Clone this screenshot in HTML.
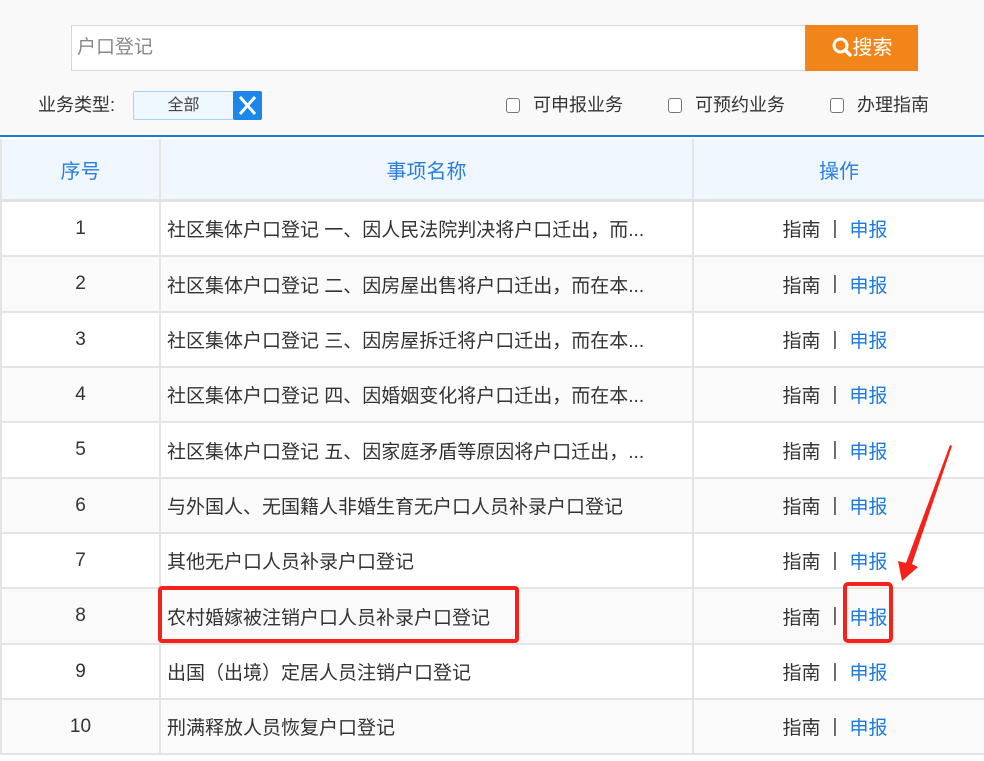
<!DOCTYPE html>
<html><head><meta charset="utf-8"><style>
*{margin:0;padding:0;box-sizing:border-box}
body{width:984px;height:761px;overflow:hidden;background:#fff;font-family:"Liberation Sans","Noto Sans CJK SC",sans-serif;color:#333;position:relative}
.top{position:absolute;left:0;top:0;width:984px;height:137px;background:#f9f9f9;border-bottom:2px solid #1f7ad8}
.inp{position:absolute;left:71px;top:25px;width:735px;height:46px;border:1px solid #d6d6d6;background:#fff;font-size:19px;color:#888;line-height:44px;padding-left:5px}
.btn{position:absolute;left:805px;top:25px;width:113px;height:46px;background:#f18519;color:#fff;font-size:20px;line-height:46px;text-align:center}
.lbl{position:absolute;top:93px;font-size:18px;line-height:24px;color:#333}
.sel{position:absolute;left:133px;top:91px;width:101px;height:29px;border:1px solid #a9d3f5;background:#eef6fe;border-radius:2px;font-size:16px;text-align:center;line-height:27px;color:#444}
.x{position:absolute;left:233px;top:91px;width:29px;height:29px;background:#1c86ea;border-radius:2px}
.cb{position:absolute;top:98px;width:14px;height:15px;border:1px solid #777;border-radius:3px;background:#fff}
.row{position:absolute;left:0;width:984px;border-bottom:2px solid #e4e4e4;font-size:19px}
.row div{position:absolute;top:0;height:100%;display:flex;align-items:center}
.c1{left:0;width:159px;justify-content:center;border-left:2px solid #e4e4e4}
.c2{left:159px;width:533px;border-left:2px solid #e4e4e4;padding-left:6px}
.c3{left:692px;width:292px;border-left:2px solid #e4e4e4;justify-content:center}
.c3x{padding-right:8px}
.hd{color:#2a7fdc;font-size:20px}
.blue{color:#1b7ae0}
.sep{margin:0 12px;color:#444}
</style></head><body>
<div class="top">
<div class="inp">户口登记</div>
<div class="btn"><svg width="22" height="22" viewBox="0 0 22 22" style="vertical-align:-4px"><circle cx="9.5" cy="9.5" r="6.5" fill="none" stroke="#fff" stroke-width="3"/><line x1="14" y1="14" x2="19" y2="19" stroke="#fff" stroke-width="3.5" stroke-linecap="round"/></svg>搜索</div>
<div class="lbl" style="left:38px">业务类型:</div>
<div class="sel">全部</div>
<div class="x"><svg width="29" height="29"><path d="M7 6L22 23M22 6L7 23" stroke="#fff" stroke-width="3"/></svg></div>
<div class="cb" style="left:506px"></div><div class="lbl" style="left:533px">可申报业务</div>
<div class="cb" style="left:668px"></div><div class="lbl" style="left:695px">可预约业务</div>
<div class="cb" style="left:830px"></div><div class="lbl" style="left:857px">办理指南</div>
</div>
<div class="row" style="top:139px;height:63px;background:#eff6fe;border-bottom:3px solid #e2e2e2"><div class="c1 hd">序号</div><div class="c2 hd" style="justify-content:center;padding:0">事项名称</div><div class="c3 hd">操作</div></div>

<div class="row" style="top:202px;height:55px"><div class="c1">1</div><div class="c2">社区集体户口登记 一、因人民法院判决将户口迁出，而...</div><div class="c3 c3x">指南<span class="sep">|</span><span class="blue">申报</span></div></div>
<div class="row" style="top:257px;height:56px;background:#fafafa"><div class="c1">2</div><div class="c2">社区集体户口登记 二、因房屋出售将户口迁出，而在本...</div><div class="c3 c3x">指南<span class="sep">|</span><span class="blue">申报</span></div></div>
<div class="row" style="top:313px;height:55px"><div class="c1">3</div><div class="c2">社区集体户口登记 三、因房屋拆迁将户口迁出，而在本...</div><div class="c3 c3x">指南<span class="sep">|</span><span class="blue">申报</span></div></div>
<div class="row" style="top:368px;height:55px;background:#fafafa"><div class="c1">4</div><div class="c2">社区集体户口登记 四、因婚姻变化将户口迁出，而在本...</div><div class="c3 c3x">指南<span class="sep">|</span><span class="blue">申报</span></div></div>
<div class="row" style="top:423px;height:56px"><div class="c1">5</div><div class="c2">社区集体户口登记 五、因家庭矛盾等原因将户口迁出，...</div><div class="c3 c3x">指南<span class="sep">|</span><span class="blue">申报</span></div></div>
<div class="row" style="top:479px;height:55px;background:#fafafa"><div class="c1">6</div><div class="c2">与外国人、无国籍人非婚生育无户口人员补录户口登记</div><div class="c3 c3x">指南<span class="sep">|</span><span class="blue">申报</span></div></div>
<div class="row" style="top:534px;height:55px"><div class="c1">7</div><div class="c2">其他无户口人员补录户口登记</div><div class="c3 c3x">指南<span class="sep">|</span><span class="blue">申报</span></div></div>
<div class="row" style="top:589px;height:56px;background:#fafafa"><div class="c1">8</div><div class="c2">农村婚嫁被注销户口人员补录户口登记</div><div class="c3 c3x">指南<span class="sep">|</span><span class="blue">申报</span></div></div>
<div class="row" style="top:645px;height:55px"><div class="c1">9</div><div class="c2">出国（出境）定居人员注销户口登记</div><div class="c3 c3x">指南<span class="sep">|</span><span class="blue">申报</span></div></div>
<div class="row" style="top:700px;height:55px;background:#fafafa"><div class="c1">10</div><div class="c2">刑满释放人员恢复户口登记</div><div class="c3 c3x">指南<span class="sep">|</span><span class="blue">申报</span></div></div>

<div style="position:absolute;left:158px;top:586px;width:361px;height:57px;border:4px solid #f5221b;border-radius:4px"></div>
<div style="position:absolute;left:843px;top:582px;width:50px;height:61px;border:4px solid #f5221b;border-radius:5px"></div>
<svg style="position:absolute;left:0;top:0" width="984" height="761"><polygon points="950,445 952,446 912,564 918,567 902,581 898,561 906,563" fill="#f5221b"/></svg>
</body></html>
